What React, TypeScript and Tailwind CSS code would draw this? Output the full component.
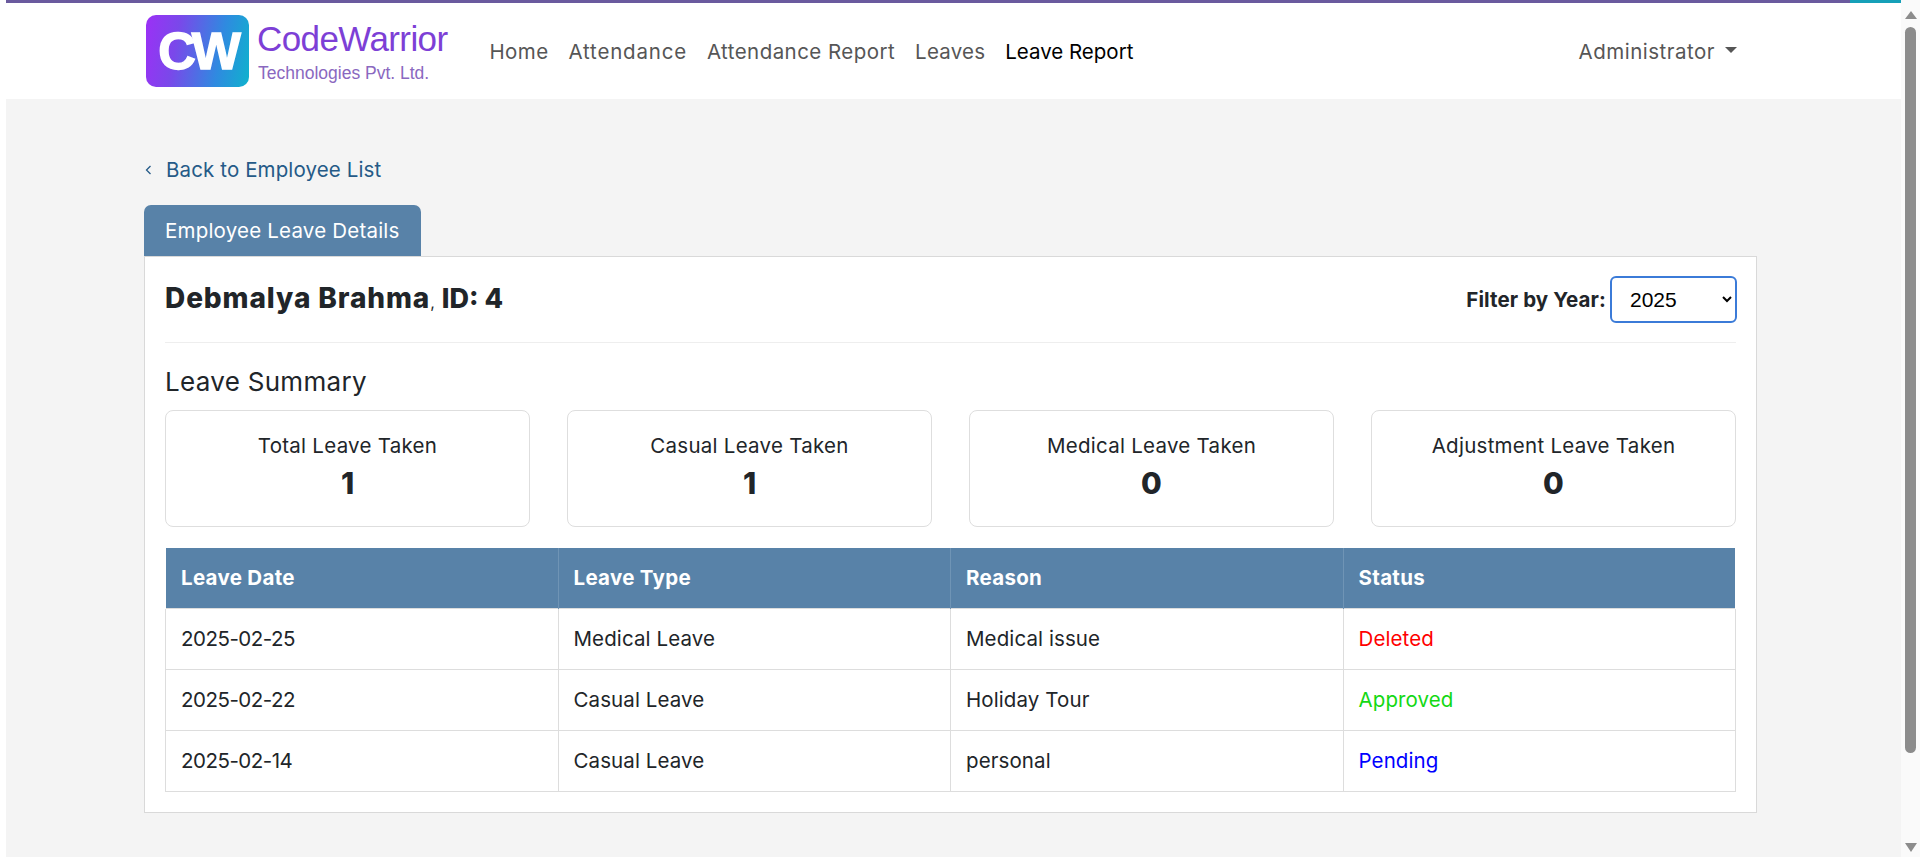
import React from "react";

const font = "font-['Inter','Liberation_Sans',sans-serif]";

function Stat({ label, value }: { label: string; value: string }) {
  return (
    <div className="h-[117px] rounded-[8px] border border-[#dedede] bg-white pt-[20px] text-center">
      <div className="text-[20.5px] leading-[30px] tracking-[0.27px] text-[#212529]">{label}</div>
      <div className="mt-[7px] text-[30px] font-extrabold leading-[30px] text-[#212529]">{value}</div>
    </div>
  );
}

const rows = [
  ["2025-02-25", "Medical Leave", "Medical issue", "Deleted", "text-[#ff0000]"],
  ["2025-02-22", "Casual Leave", "Holiday Tour", "Approved", "text-[#14d814]"],
  ["2025-02-14", "Casual Leave", "personal", "Pending", "text-[#0000ff]"],
];

const navItems = [
  ["Home", "tracking-[0.4px]"],
  ["Attendance", "tracking-[0.8px]"],
  ["Attendance Report", "tracking-[0.45px]"],
  ["Leaves", "tracking-[0.2px]"],
];

export default function App() {
  return (
    <div className={`relative flex h-[857px] overflow-hidden bg-white ${font}`}>
      <div className="absolute left-[6px] top-0 h-[3px] w-[1844px] bg-[#6a5a9e]" />
      <div className="absolute left-[1850px] top-0 h-[3px] w-[70px] bg-[#16a0b8]" />

      <div className="ml-[6px] flex w-[1895px] flex-col bg-[#f4f4f4]">
        <header className="flex h-[99px] shrink-0 items-center bg-white pl-[140px] pt-[3px]">
          <div className="flex items-center">
            <div className="flex h-[72px] w-[103px] items-center justify-center rounded-[10px] bg-[linear-gradient(100deg,#9c30f6_0%,#7a48ea_30%,#2f8ae0_70%,#0fb2cd_100%)] font-['Liberation_Sans',sans-serif] text-[52px] font-bold tracking-[-4px] text-white [-webkit-text-stroke:1.5px_white]">
              CW
            </div>
            <div className="ml-[8px] font-['Liberation_Sans',sans-serif]">
              <div className="text-[35px] leading-[40px] tracking-[-0.6px] text-[#7d3fd6]">CodeWarrior</div>
              <div className="ml-[1px] mt-[4px] text-[17.5px] leading-[20px] text-[#8a68c0]">Technologies Pvt. Ltd.</div>
            </div>
          </div>
          <nav className="ml-[42px] mt-[3px] flex items-center gap-[20px] text-[20.5px] text-[#565656]">
            {navItems.map(([n, t]) => (
              <a key={n} className={t}>{n}</a>
            ))}
            <a className="text-black">Leave Report</a>
          </nav>
          <div className="ml-auto mr-[164px] mt-[3px] flex items-center text-[20.5px] tracking-[0.5px] text-[#565656]">
            <span>Administrator</span>
            <svg className="mb-[6px] ml-[10px]" width="12" height="6" viewBox="0 0 12 6">
              <path d="M0 0h12L6 6z" fill="#565656" />
            </svg>
          </div>
        </header>

        <main className="ml-[138px] w-[1613px]">
          <a className="mt-[56px] flex h-[30px] items-center text-[20.5px] tracking-[0.12px] text-[#255a87]">
            <svg width="7" height="10" viewBox="0 0 7 10" className="ml-[1px]">
              <path d="M5.5 1 1.5 5l4 4" fill="none" stroke="#255a87" strokeWidth="1.3" />
            </svg>
            <span className="ml-[14px]">Back to Employee List</span>
          </a>

          <div className="mt-[20px] flex h-[51px] w-[277px] items-center rounded-t-[7px] bg-[#5882a8] pl-[21px] pt-[2px] text-[20.5px] tracking-[0.2px] text-white">
            Employee Leave Details
          </div>

          <section className="border border-[#d9d9d9] bg-white px-[20px] pb-[20px]">
            <div className="flex items-center justify-between border-b border-[#eeeeee] pb-[19px] pt-[19px]">
              <h1 className="mt-[-2px] text-[28px] font-extrabold tracking-[0.9px] text-[#212529]">
                Debmalya Brahma<span className="text-[16px] font-normal tracking-normal">,</span>{" "}
                <span className="text-[27px] tracking-normal">ID: 4</span>
              </h1>
              <label className="flex items-center text-[20.5px] font-bold tracking-[0.1px] text-[#212529]">
                <span className="mt-[1px]">Filter by Year:</span>
                <select
                  defaultValue="2025"
                  className="ml-[4px] mr-[-1px] h-[47px] w-[127px] rounded-[6px] border-2 border-[#3b7bd8] bg-white pl-[14px] font-['Liberation_Sans',sans-serif] text-[21px] font-normal tracking-normal text-black outline-none"
                >
                  <option>2025</option>
                  <option>2024</option>
                </select>
              </label>
            </div>

            <h2 className="mt-[23px] text-[26px] leading-[32px] tracking-[0.3px] text-[#212529]">Leave Summary</h2>

            <div className="mt-[12px] grid grid-cols-4 gap-[37px]">
              <Stat label="Total Leave Taken" value="1" />
              <Stat label="Casual Leave Taken" value="1" />
              <Stat label="Medical Leave Taken" value="0" />
              <Stat label="Adjustment Leave Taken" value="0" />
            </div>

            <table className="mt-[21px] w-full table-fixed border-collapse text-left text-[20.5px] tracking-[0.1px] text-[#212529]">
              <thead>
                <tr className="h-[60px] bg-[#5882a8] text-white">
                  {["Leave Date", "Leave Type", "Reason", "Status"].map((h) => (
                    <th key={h} className="border-x border-[#6f94b5] pl-[15px] pt-[1px] font-bold tracking-[0.3px] first:border-l-[#ffffff] last:border-r-[#ffffff]">
                      {h}
                    </th>
                  ))}
                </tr>
              </thead>
              <tbody>
                {rows.map((r) => (
                  <tr key={r[0]} className="h-[61px]">
                    <td className="border border-[#dddddd] pl-[15px] pt-[2px] tracking-[-0.5px]">{r[0]}</td>
                    <td className="border border-[#dddddd] pl-[15px] pt-[2px]">{r[1]}</td>
                    <td className="border border-[#dddddd] pl-[15px] pt-[2px]">{r[2]}</td>
                    <td className={`border border-[#dddddd] pl-[15px] pt-[2px] ${r[4]}`}>{r[3]}</td>
                  </tr>
                ))}
              </tbody>
            </table>
          </section>
        </main>
      </div>

      <aside className="relative flex w-[19px] flex-col items-center bg-[#fafafa] pt-[11px]">
        <svg width="12" height="9" viewBox="0 0 12 9">
          <path d="M6 0 12 8H0z" fill="#8c8c8c" />
        </svg>
        <div className="mt-[7px] h-[726px] w-[11px] rounded-full bg-[#8c8c8c]" />
        <svg className="mt-[90px]" width="12" height="9" viewBox="0 0 12 9">
          <path d="M0 0h12L6 9z" fill="#8c8c8c" />
        </svg>
      </aside>
    </div>
  );
}
